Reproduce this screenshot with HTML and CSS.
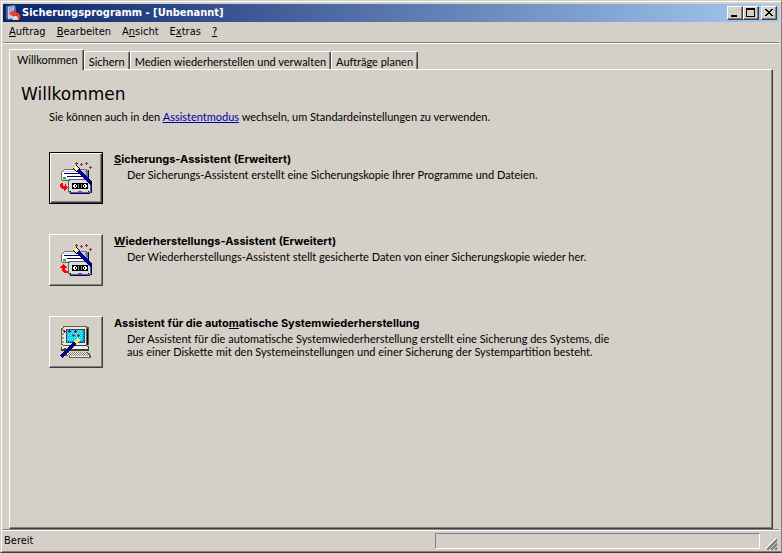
FILE: index.html
```html
<!DOCTYPE html>
<html lang="de">
<head>
<meta charset="utf-8">
<title>Sicherungsprogramm - [Unbenannt]</title>
<link rel="stylesheet" href="styles.css">
</head>
<body>
<svg class="defs" aria-hidden="true">
  <defs>
    <g id="star"><path d="M1 0h1v1h1v1h-1v1h-1v-1h-1v-1h1z"/></g>
    <g id="drive">
      <path fill="#707070" d="M4 7h23v1h1v8h-2v3h-24v-1h-1v-8h1v-1h1v-1h1z"/>
      <path fill="#d0d0d0" d="M4 8h22l-3 3h-21z"/>
      <path fill="#fff" d="M2 10h21v8h-21zM4 8h10v1h-10z"/>
      <path fill="#000080" d="M4 11h18v1h-18zM7 14h15v1h-15z"/>
      <path fill="#c0c0c0" d="M2 17h21v1h-21zM23 10h3v8h-3z"/>
      <path fill="#00c020" d="M3 15h3v2h-3z"/>
      <path fill="#000080" d="M28 8h1v8h-1zM10 31h20v1h-20zM31 19h1v12h-1z"/>
      <path fill="#606060" d="M9 17h21v1h1v13h-22v-1h-1v-12h1z"/>
      <path fill="#dcdcdc" d="M10 18h19v1h1v11h-20v-1h-1v-10h1z"/>
      <path fill="#000" d="M12 21h16v6h-16zM10 29h1v1h-1zM28 29h1v1h-1z"/>
      <path fill="#fff" d="M14 22h2v1h-1v2h1v1h-2v-1h-1v-2h1zM16 23h1v2h-1zM25 22h1v1h1v2h-1v1h-2v-1h1v-2h-1v-1zM23 23h1v2h-1z"/>
      <path fill="#808080" d="M18 22h1v4h-1zM21 22h1v4h-1z"/>
      <path fill="#606060" d="M18 29h4v1h-4z"/>
    </g>
    <g id="wand">
      <path stroke="#000" stroke-width="5" d="M15 5L19 9"/>
      <path stroke="#000040" stroke-width="3" d="M18 8L32 22"/>
      <path stroke="#0000c0" stroke-width="2" d="M18 8L31 21"/>
      <path stroke="#ffff80" stroke-width="3" d="M15 5L18 8"/>
      <path fill="#fff" d="M15 5h2v1h-2z"/>
    </g>
    <g id="stars">
      <use href="#star" x="15" y="0" fill="#902060"/><use href="#star" x="20" y="1" fill="#a02080"/>
      <use href="#star" x="25" y="0" fill="#903040"/><use href="#star" x="29" y="4" fill="#903030"/>
    </g>
  </defs>
</svg>

<div class="window">
  <header class="titlebar">
    <svg class="app-icon" viewBox="0 0 16 16" aria-hidden="true">
      <path fill="#5868a0" d="M1 1l8-1 2 1v13l-8 1-2-2z"/>
      <path fill="#c8d0e8" d="M3 2l6-1v12l-6 1z"/>
      <path fill="#7080b0" d="M4 3l4-1v1l-4 1zM4 5l4-1v1l-4 1zM4 7l4-1v1l-4 1z"/>
      <path fill="#d8d8e0" d="M5 11h7l2 2v2h-6z"/>
      <path fill="#f04018" d="M4 9l5-4v2c5 0 7 3 6 7l-2 1c0-3-1-5-4-5v2z"/>
    </svg>
    <h1 class="caption">Sicherungsprogramm - [Unbenannt]</h1>
    <div class="caption-buttons">
      <button class="caption-button" aria-label="Minimieren"><svg viewBox="0 0 12 10"><path d="M2 7h6v2h-6z"/></svg></button>
      <button class="caption-button" aria-label="Maximieren"><svg viewBox="0 0 12 10"><path fill-rule="evenodd" d="M1 0h9v9h-9zM2 2v6h7v-6z"/></svg></button>
      <button class="caption-button close" aria-label="Schließen"><svg viewBox="0 0 12 10"><path d="M2 1h2v1h1v1h2v-1h1v-1h2v1h-1v1h-1v1h-1v1h1v1h1v1h1v1h-2v-1h-1v-1h-2v1h-1v1h-2v-1h1v-1h1v-1h1v-1h-1v-1h-1v-1h-1z"/></svg></button>
    </div>
  </header>

  <nav class="menubar">
    <button class="menu"><u>A</u>uftrag</button>
    <button class="menu"><u>B</u>earbeiten</button>
    <button class="menu">A<u>n</u>sicht</button>
    <button class="menu">E<u>x</u>tras</button>
    <button class="menu"><u>?</u></button>
  </nav>

  <main class="client">
    <div class="tabs" role="tablist">
      <button class="tab active" role="tab" aria-selected="true">Willkommen</button>
      <button class="tab" role="tab" aria-selected="false">Sichern</button>
      <button class="tab" role="tab" aria-selected="false">Medien wiederherstellen und verwalten</button>
      <button class="tab" role="tab" aria-selected="false">Aufträge planen</button>
    </div>
    <section class="panel" role="tabpanel">
      <h2 class="heading">Willkommen</h2>
      <p class="intro">Sie können auch in den <a href="#assistent">Assistentmodus</a> wechseln, um Standardeinstellungen zu verwenden.</p>
      <div class="wizards">
        <div class="wizard">
          <button class="wizard-button default" aria-labelledby="w1">
            <svg viewBox="0 0 32 32">
              <use href="#drive"/><use href="#wand"/><use href="#stars"/>
              <path fill="#f00" d="M1 21h2v3h2v-2h1v2h1v1h1v1h-1v1h-1v1h-1v1h-1v-2h-2v-1h-1v-1h-1v-3h1z"/>
            </svg>
          </button>
          <div class="wizard-text">
            <h3 id="w1"><u>S</u>icherungs-Assistent (Erweitert)</h3>
            <p>Der Sicherungs-Assistent erstellt eine Sicherungskopie Ihrer Programme und Dateien.</p>
          </div>
        </div>
        <div class="wizard">
          <button class="wizard-button" aria-labelledby="w2">
            <svg viewBox="0 0 32 32">
              <use href="#drive"/><use href="#wand"/><use href="#stars"/>
              <path fill="#f00" d="M3 20h1v1h1v1h1v1h1v1h-2v2h1v1h2v2h-4v-1h-1v-1h-1v-3h-2v-1h1v-1h1v-1h1z"/>
            </svg>
          </button>
          <div class="wizard-text">
            <h3 id="w2"><u>W</u>iederherstellungs-Assistent (Erweitert)</h3>
            <p>Der Wiederherstellungs-Assistent stellt gesicherte Daten von einer Sicherungskopie wieder her.</p>
          </div>
        </div>
        <div class="wizard">
          <button class="wizard-button" aria-labelledby="w3">
            <svg viewBox="0 0 32 32">
              <path fill="#606040" d="M3 0h24v1h2v18h-2v1h-24v-1h-2v-17h2z"/>
              <path fill="#e8e8e0" d="M4 1h22v18h-22l-2-1v-15z"/>
              <path fill="#a0a078" d="M2 3h2v2h-2zM2 7h2v2h-2zM2 11h2v2h-2zM2 15h2v2h-2z"/>
              <path fill="#000" d="M27 3h1v16h-1z"/>
              <path fill="#404060" d="M6 3h19v14h-19z"/>
              <path fill="#00d8f0" d="M7 4h17v12h-17z"/>
              <path fill="none" stroke="#2050c0" stroke-dasharray="1 1" d="M8 15.500h16M23.500 4v12"/>
              <path fill="none" stroke="#80f0ff" stroke-dasharray="1 1" d="M8 5.500h14M9 7.500h14M8 9.500h14M9 11.500h14M8 13.500h14"/>
              <path fill="#404030" d="M5 19h22v1h2v5h-28v-4h2z"/>
              <path fill="#f0f0e8" d="M4 20h23v1h1v2h-26v-2h2z"/>
              <path fill="#008000" d="M4 22h2v1h-2z"/>
              <path fill="#606050" d="M3 26h25v1h2v2h1v3h-22v-2h-7z"/>
              <path fill="#f0f0e8" d="M8 26h18v1h2v2h1v2h-18l-5-3z"/>
              <path stroke="#808070" stroke-dasharray="1 1" d="M8 26.500h19M9 27.500h19M8 28.500h20M9 29.500h19"/>
              <path stroke="#000040" stroke-width="3" d="M1 31L17 15"/>
              <path stroke="#0000a0" stroke-width="2" d="M1 31L17 15"/>
              <path stroke="#403000" stroke-width="4" d="M15 17L19 13"/>
              <path stroke="#ffe080" stroke-width="3" d="M15 17L19 13"/>
              <use href="#star" x="3" y="4" fill="#900020"/><use href="#star" x="8" y="4" fill="#600060"/>
              <use href="#star" x="12" y="8" fill="#a02020"/><use href="#star" x="17" y="8" fill="#a02020"/>
              <use href="#star" x="14" y="4" fill="#900020"/>
            </svg>
          </button>
          <div class="wizard-text">
            <h3 id="w3">Assistent für die auto<u>m</u>atische Systemwiederherstellung</h3>
            <p>Der Assistent für die automatische Systemwiederherstellung erstellt eine Sicherung des Systems, die aus einer Diskette mit den Systemeinstellungen und einer Sicherung der Systempartition besteht.</p>
          </div>
        </div>
      </div>
    </section>
  </main>

  <footer class="statusbar">
    <span class="status">Bereit</span>
    <div class="status-pane"></div>
    <svg class="grip" viewBox="0 0 12 12" aria-hidden="true">
      <path stroke="#fff" d="M0 11L11 0M4 11L11 4M8 11L11 8"/>
      <path stroke="#808080" stroke-width="2" d="M2 12L12 2M6 12L12 6M10 12L12 10"/>
    </svg>
  </footer>
</div>
</body>
</html>
```
FILE: styles.css
```css
:root {
  --face: #d4d0c8;
  --light: #ffffff;
  --shadow: #808080;
  --dark: #404040;
  --body-font: Lato, "Liberation Sans", Arial, sans-serif;
  --bold-font: Inter, "Liberation Sans", Arial, sans-serif;
  --ui-font: "DejaVu Sans Condensed", "DejaVu Sans", Tahoma, sans-serif;
}

* {
  box-sizing: border-box;
}

body {
  margin: 0;
  background: var(--face);
  color: #000;
  font: 11px/13px var(--body-font);
}

h1, h2, h3, p {
  margin: 0;
}

button {
  margin: 0;
  padding: 0;
  border: 0;
  background: var(--face);
  color: #000;
  font: inherit;
}

svg {
  display: block;
  shape-rendering: crispEdges;
}

.defs {
  position: absolute;
  width: 0;
  height: 0;
}

.window {
  display: flex;
  flex-direction: column;
  min-height: 100vh;
  padding: 2px 2px 0 1px;
  border: 1px solid var(--face);
  border-right-color: var(--shadow);
  border-bottom-color: var(--dark);
  box-shadow: inset 1px 1px var(--light), inset 0 -1px var(--shadow);
}

.titlebar {
  display: flex;
  align-items: center;
  height: 18px;
  margin: 1px 0 0 1px;
  padding: 0 2px;
  background: linear-gradient(to right, #0a246a, #a6caf0);
}

.app-icon {
  width: 16px;
  height: 16px;
  shape-rendering: auto;
}

.caption {
  flex: 1;
  padding-left: 1px;
  color: #fff;
  font: bold 11px/16px var(--ui-font);
  white-space: nowrap;
}

.caption-buttons {
  display: flex;
}

.caption-button {
  width: 16px;
  height: 14px;
  padding: 1px;
  border: 1px solid;
  border-color: var(--light) var(--dark) var(--dark) var(--light);
  box-shadow: inset -1px -1px var(--shadow);
}

.caption-button svg {
  width: 12px;
  height: 10px;
}

.caption-button.close {
  margin-left: 2px;
}

.menubar {
  display: flex;
  gap: 11px;
  height: 22px;
  margin-left: 1px;
  padding: 0 6px;
  border-bottom: 1px solid var(--light);
  box-shadow: inset 0 -1px var(--shadow);
  font: 11px/20px var(--ui-font);
}

.menu {
  height: 20px;
}

.client {
  display: flex;
  flex: 1;
  flex-direction: column;
  padding: 5px 6px 0 7px;
}

.tabs {
  display: flex;
  align-items: flex-end;
}

.tab {
  height: 18px;
  padding: 1px 4px 0;
  border: 1px solid var(--light);
  border-right-color: var(--dark);
  border-bottom: 0;
  border-radius: 2px 2px 0 0;
  box-shadow: inset -1px 0 var(--shadow);
  white-space: nowrap;
}

.tab.active {
  position: relative;
  height: 21px;
  margin-bottom: -1px;
  padding: 0 5px 2px 7px;
}

.panel {
  flex: 1;
  padding: 12px 11px;
  border: 1px solid;
  border-color: var(--light) var(--dark) var(--dark) var(--light);
  box-shadow: inset -1px -1px var(--shadow);
}

.heading {
  font: 17px/24px "DejaVu Sans", Verdana, sans-serif;
}

.intro {
  margin: 4px 0 0 28px;
}

.intro a {
  color: #0000a0;
}

.wizards {
  display: grid;
  gap: 30px;
  margin: 29px 0 0 28px;
}

.wizard {
  display: flex;
  gap: 11px;
}

.wizard-button {
  display: grid;
  flex: none;
  place-items: center;
  width: 54px;
  height: 52px;
  border: 1px solid;
  border-color: var(--light) var(--dark) var(--dark) var(--light);
  box-shadow: inset -1px -1px var(--shadow);
}

.wizard-button.default {
  border-color: #000;
  box-shadow: inset 1px 1px var(--light), inset -1px -1px var(--dark), inset -2px -2px var(--shadow);
}

.wizard-button svg {
  width: 32px;
  height: 32px;
}

.wizard-text {
  max-width: 500px;
}

.wizard-text h3 {
  font: bold 11px/14px var(--bold-font);
}

.wizard-text p {
  margin: 2px 0 0 13px;
}

.statusbar {
  display: flex;
  align-items: center;
  height: 23px;
  margin-left: 1px;
  padding: 2px 2px 2px 1px;
  border-top: 1px solid var(--shadow);
  box-shadow: inset 0 1px var(--light);
  font: 11px/16px var(--ui-font);
}

.status {
  flex: 4;
}

.status-pane {
  flex: 3;
  height: 16px;
  border: 1px solid;
  border-color: var(--shadow) var(--light) var(--light) var(--shadow);
}

.grip {
  align-self: flex-end;
  width: 12px;
  height: 12px;
  margin-left: 5px;
}
```
